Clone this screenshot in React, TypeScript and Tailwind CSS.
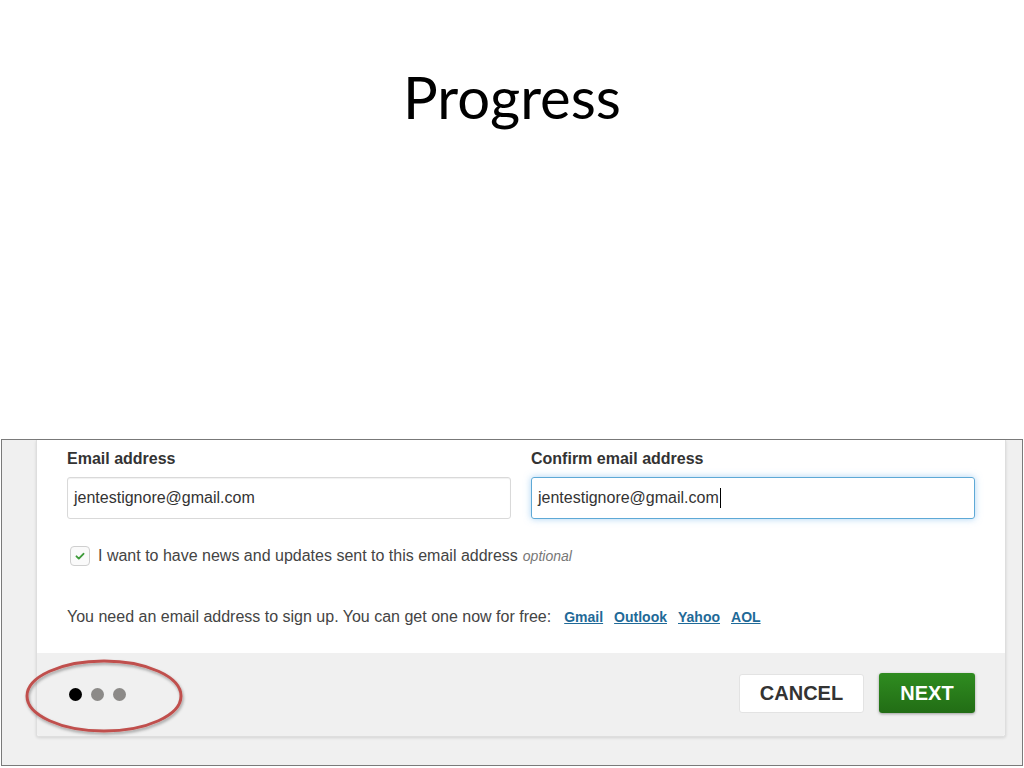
import React from "react";

const sans = { fontFamily: "'Liberation Sans', Arial, sans-serif" };

function Dots() {
  return (
    <div className="flex items-center gap-[9px] mt-[3px]">
      <span className="w-[13px] h-[13px] rounded-full bg-black" />
      <span className="w-[13px] h-[13px] rounded-full bg-[#8c8a88]" />
      <span className="w-[13px] h-[13px] rounded-full bg-[#8c8a88]" />
    </div>
  );
}

export default function App() {
  return (
    <div className="relative w-[1024px] h-[768px] bg-white overflow-hidden flex flex-col">
      {/* Slide title */}
      <div className="h-[439px] flex justify-center pt-[60px]">
        <h1 className="text-[58px] leading-[74px] text-black" style={{ fontFamily: "Lato, 'Open Sans', sans-serif" }}>
          Progress
        </h1>
      </div>

      {/* Screenshot frame */}
      <div
        className="ml-[1px] w-[1022px] h-[327px] border border-[#7a7a7a] bg-[#f0f0f0] pl-[34px] pr-[16px] pb-[28px] flex flex-col"
        style={sans}
      >
        <div className="flex-1 flex flex-col bg-white border-x border-b border-[#dedede] rounded-b-[3px] shadow-[0_1px_3px_rgba(0,0,0,0.12)]">
          <div className="px-[30px] pt-[9px] pb-[26px]">
            <div className="grid grid-cols-2 gap-x-[20px]">
              <div>
                <div className="text-[16px] leading-[20px] font-bold text-[#333] mb-[8px]">Email address</div>
                <div className="h-[42px] border border-[#d9d9d9] rounded-[3px] shadow-[inset_0_1px_1px_rgba(0,0,0,0.06)] flex items-center pl-[6px] text-[16px] text-[#333]">
                  jentestignore@gmail.com
                </div>
              </div>
              <div>
                <div className="text-[16px] leading-[20px] font-bold text-[#333] mb-[8px]">Confirm email address</div>
                <div className="h-[42px] border border-[#5ea9d6] rounded-[3px] shadow-[0_0_7px_rgba(102,175,233,0.55)] flex items-center pl-[6px] text-[16px] text-[#333]">
                  jentestignore@gmail.com
                  <span className="w-[1px] h-[20px] bg-black ml-[1px]" />
                </div>
              </div>
            </div>

            <div className="mt-[27px] ml-[3px] flex items-center h-[20px]">
              <span className="w-[20px] h-[20px] border border-[#cfcfcf] rounded-[4px] bg-[#fafafa] flex items-center justify-center">
                <svg width="12" height="12" viewBox="0 0 12 12" fill="none">
                  <path d="M2.5 6.3l2.3 2.3 4.7-4.8" stroke="#3e9b3a" strokeWidth="1.9" strokeLinecap="round" strokeLinejoin="round" />
                </svg>
              </span>
              <span className="ml-[8px] text-[16px] text-[#444]">
                I want to have news and updates sent to this email address
              </span>
              <span className="ml-[5px] text-[14px] italic text-[#777]">optional</span>
            </div>

            <div className="mt-[41px] flex items-center h-[20px] text-[16px] text-[#444]">
              <span>You need an email address to sign up. You can get one now for free:</span>
              <a className="ml-[13px] text-[14px] font-bold text-[#1f6a98] underline">Gmail</a>
              <a className="ml-[11px] text-[14px] font-bold text-[#1f6a98] underline">Outlook</a>
              <a className="ml-[11px] text-[14px] font-bold text-[#1f6a98] underline">Yahoo</a>
              <a className="ml-[11px] text-[14px] font-bold text-[#1f6a98] underline">AOL</a>
            </div>
          </div>

          <div className="flex-1 bg-[#f0f0f0] flex items-center justify-between pl-[32px] pr-[30px] pb-[3px] rounded-b-[3px]">
            <Dots />
            <div className="flex items-center gap-[15px]">
              <button className="w-[125px] h-[39px] bg-white border border-[#e3e3e3] rounded-[3px] text-[20px] font-bold text-[#333]">
                CANCEL
              </button>
              <button className="w-[96px] h-[40px] rounded-[3px] bg-gradient-to-b from-[#2f8c20] to-[#226d15] shadow-[0_1px_3px_rgba(0,0,0,0.35)] text-[20px] font-bold text-white">
                NEXT
              </button>
            </div>
          </div>
        </div>
      </div>

      {/* Annotation ellipse */}
      <svg className="absolute left-[20px] top-[653px]" width="172" height="90" viewBox="0 0 172 90">
        <defs>
          <filter id="sh" x="-20%" y="-20%" width="140%" height="150%">
            <feDropShadow dx="1" dy="2" stdDeviation="1.5" floodColor="#000" floodOpacity="0.35" />
          </filter>
        </defs>
        <ellipse cx="84" cy="43" rx="77" ry="35" fill="none" stroke="#c0504d" strokeWidth="3" filter="url(#sh)" />
      </svg>
    </div>
  );
}
